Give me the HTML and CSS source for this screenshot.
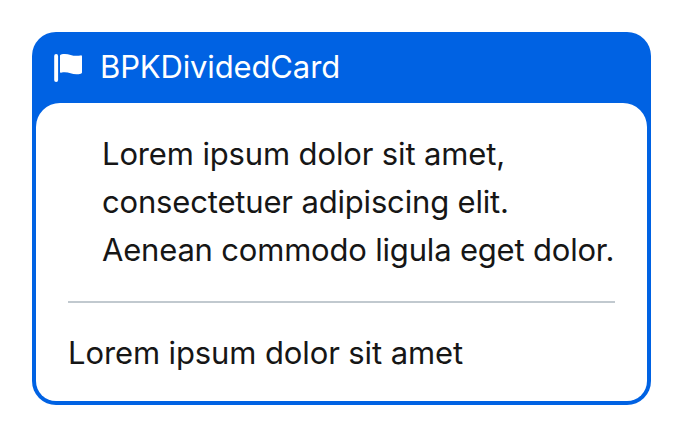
FILE: index.html
```html
<!DOCTYPE html>
<html lang="en">
<head>
<meta charset="utf-8">
<title>BPKDividedCard</title>
<link rel="stylesheet" href="styles.css">
</head>
<body>
<article class="card-wrapper">
  <header class="card-header">
    <svg class="flag" viewBox="0 0 30 30" aria-hidden="true">
      <rect x="1.200" y="1" width="3.900" height="28" rx="1.900"/>
      <path d="M7 2.600q0-1 1-1.200c8-2 11 2.900 19.500 1q1.500-.3 1.500 1.200v15.800q0 1-1.200 1.300C19 23 16 17.500 8 19.700q-1 .2-1-.8z"/>
    </svg>
    <h1 class="title">BPKDividedCard</h1>
  </header>
  <div class="card">
    <p class="primary"><span class="l1">Lorem ipsum dolor sit amet,</span><span class="l2">consectetuer adipiscing elit.</span><span class="l3">Aenean commodo ligula eget dolor.</span></p>
    <p class="secondary">Lorem ipsum dolor sit amet</p>
  </div>
</article>
</body>
</html>
```
FILE: styles.css
```css
* { box-sizing: border-box; }
body { margin: 0; padding: 32px; background: #fff; font-family: Inter, "Liberation Sans", sans-serif; font-size: 31px; letter-spacing: -.14px; color: #161616; }
.card-wrapper { width: 619px; height: 373px; padding: 0 4px 4px; border-radius: 24px; background: #0062e3; display: flex; flex-direction: column; }
.card-header { height: 71px; display: flex; align-items: center; padding-left: 17px; gap: 17px; color: #fff; }
.flag { width: 30px; height: 30px; margin-top: 1px; fill: currentColor; }
.title { margin: 0; padding-bottom: 2px; font-size: 31px; font-weight: 400; }
.card { flex: 1; background: #fff; border-radius: 24px 24px 20px 20px; padding: 27px 32px 0; }
p { margin: 0; line-height: 48px; white-space: nowrap; }
.primary { height: 173px; padding-left: 34px; border-bottom: 2px solid #c1c9cf; }
.primary span { display: block; width: max-content; }
.l2 { letter-spacing: -.17px; }
.l3 { letter-spacing: -.19px; }
.secondary { padding-top: 26px; letter-spacing: -.11px; }
```
